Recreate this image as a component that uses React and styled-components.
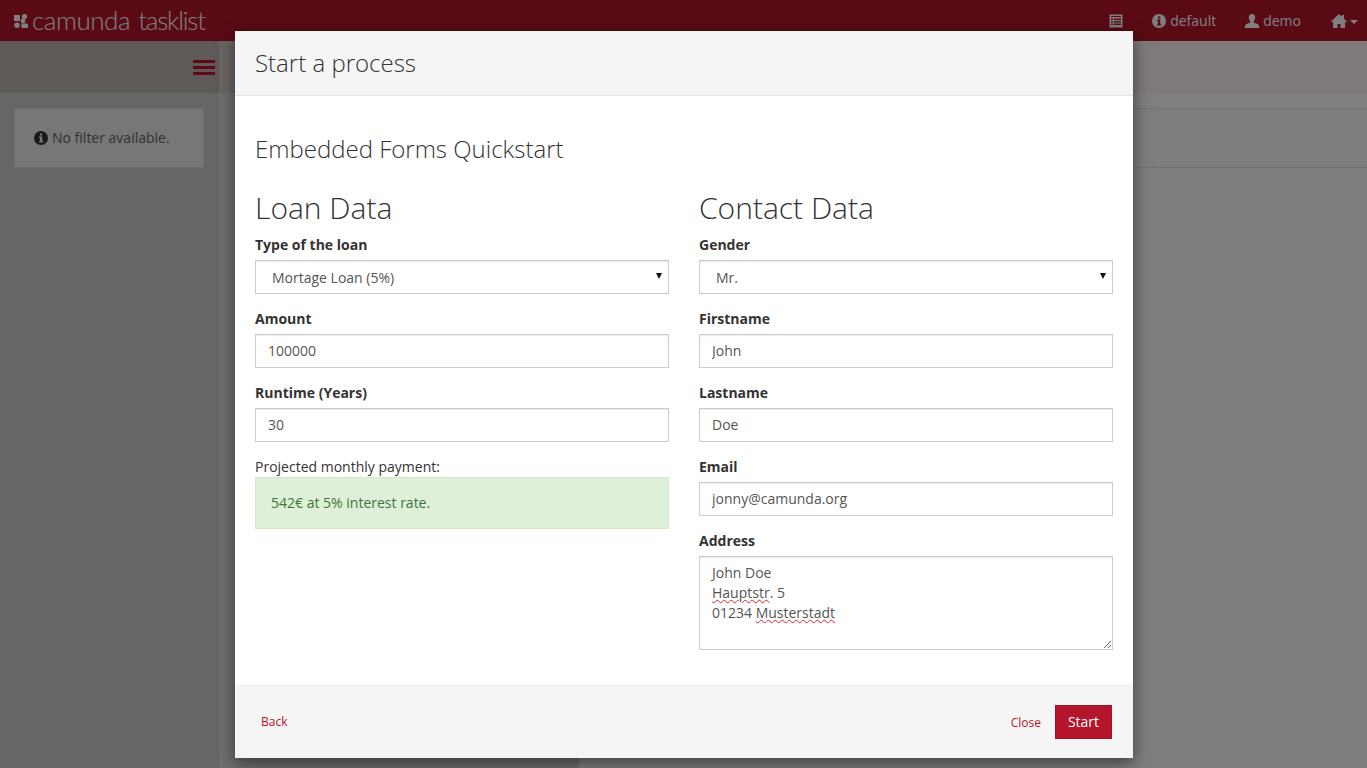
import React from "react";
import styled, { createGlobalStyle } from "styled-components";

const GlobalStyle = createGlobalStyle`
  * { box-sizing: border-box; }
  html, body { margin: 0; height: 100%; overflow: hidden; }
  body {
    font-family: "Open Sans", "Liberation Sans", sans-serif;
    font-size: 14px;
    line-height: 20px;
    color: #333;
    background: #fff;
  }
`;

const Page = styled.div`
  position: relative;
  height: 100vh;
  display: flex;
  flex-direction: column;
  overflow: hidden;
`;

const Navbar = styled.header`
  height: 41px;
  flex: none;
  background: #b5152b;
  color: #fff;
  display: flex;
  align-items: center;
  justify-content: space-between;
  padding: 0 9px 0 14px;
`;

const Brand = styled.div`
  display: flex;
  align-items: center;
  gap: 4px;
  font-family: Lato, "Open Sans", sans-serif;
  font-weight: 300;
  font-size: 26px;
  line-height: 39px;
  height: 41px;
  svg {
    margin-top: 1px;
  }
`;

const BrandWord = styled.span`
  letter-spacing: ${(p) => p.$spacing}px;
  margin-left: ${(p) => p.$gap || 0}px;
`;

const NavItems = styled.nav`
  display: flex;
  align-items: center;
`;

const NavItem = styled.span`
  display: flex;
  align-items: center;
  gap: ${(p) => p.$inner || 4}px;
  margin-left: ${(p) => p.$gap}px;
`;

const Caret = styled.i`
  width: 0;
  height: 0;
  margin-top: 2px;
  border-top: 4px solid #fff;
  border-left: 4px solid transparent;
  border-right: 4px solid transparent;
`;

const Toolbar = styled.div`
  height: 52px;
  flex: none;
  display: flex;
  background: #fef4f4;
`;

const ToolbarLeft = styled.div`
  width: 219px;
  background: #beb2af;
  display: flex;
  align-items: center;
  justify-content: flex-end;
  padding: 1px 4px 0 0;
`;

const Burger = styled.div`
  width: 22px;
  display: flex;
  flex-direction: column;
  gap: 3px;
  span {
    height: 3px;
    background: #b5152b;
  }
`;

const ToolbarMiddle = styled.div`
  width: 16px;
  background: #d4cac7;
`;

const Columns = styled.main`
  flex: 1;
  display: flex;
  min-height: 0;
`;

const FilterColumn = styled.aside`
  width: 219px;
  background: #ccc;
  padding: 15px 14px;
`;

const FilterNote = styled.div`
  width: 190px;
  height: 60px;
  background: #eee;
  border: 1px solid #ddd;
  color: #666;
  display: flex;
  align-items: center;
  gap: 4px;
  padding-left: 19px;
`;

const ListColumn = styled.section`
  width: 360px;
  background: #ddd;
`;

const TaskColumn = styled.section`
  flex: 1;
  background: #fbfbfb;
`;

const TaskStrip = styled.div`
  height: 16px;
  background: #fff;
  border-bottom: 1px solid #e8e8e8;
`;

const TaskHead = styled.div`
  height: 59px;
  border-bottom: 1px solid #e4e4e4;
`;

const Backdrop = styled.div`
  position: absolute;
  inset: 0;
  background: rgba(0, 0, 0, 0.5);
`;

const Modal = styled.div`
  position: absolute;
  top: 31px;
  left: 235px;
  width: 898px;
  height: 727px;
  background: #fff;
  box-shadow: 0 5px 15px rgba(0, 0, 0, 0.5);
  display: flex;
  flex-direction: column;
`;

const ModalHeader = styled.div`
  height: 65px;
  flex: none;
  background: #f5f5f5;
  border-bottom: 1px solid #e5e5e5;
  padding: 19px 20px;
`;

const ModalTitle = styled.h3`
  margin: 0;
  font-size: 24px;
  font-weight: 300;
  line-height: 26px;
`;

const ModalBody = styled.div`
  flex: 1;
  padding: 40px 20px 0;
`;

const FormTitle = styled.h3`
  margin: 0 0 29px;
  font-size: 24px;
  font-weight: 300;
  line-height: 26px;
`;

const FormColumns = styled.div`
  display: grid;
  grid-template-columns: 414px 414px;
  column-gap: 30px;
`;

const SectionTitle = styled.h2`
  margin: 0 0 11px;
  font-size: 30px;
  font-weight: 300;
  line-height: 33px;
`;

const Group = styled.div`
  margin-bottom: 15px;
`;

const Label = styled.label`
  display: block;
  margin-bottom: 5px;
  font-weight: 700;
`;

const fieldStyle = `
  display: block;
  width: 100%;
  padding: 6px 12px;
  font: inherit;
  color: #555;
  background: #fff;
  border: 1px solid #ccc;
  border-radius: 0;
  box-shadow: inset 0 1px 1px rgba(0, 0, 0, 0.075);
  outline: none;
`;

const Input = styled.input`
  ${fieldStyle}
  height: 34px;
  padding-top: 5px;
  padding-bottom: 7px;
`;

const SelectWrap = styled.div`
  position: relative;
  &::after {
    content: "";
    position: absolute;
    top: 13px;
    right: 7px;
    border-top: 6px solid #111;
    border-left: 3px solid transparent;
    border-right: 3px solid transparent;
    pointer-events: none;
  }
`;

const Select = styled.select`
  ${fieldStyle}
  height: 34px;
  padding: 7px 12px 5px 16px;
  appearance: none;
`;

const TextArea = styled.div`
  ${fieldStyle}
  height: 94px;
  overflow: auto;
  resize: vertical;
`;

const Misspelled = styled.span`
  text-decoration: underline wavy #e0222a 1px;
  text-underline-offset: 1px;
`;

const Hint = styled.div`
  line-height: 20px;
`;

const Alert = styled.div`
  height: 52px;
  padding: 15px;
  color: #3c763d;
  background: #dff0d8;
  border: 1px solid #d6e9c6;
`;

const ModalFooter = styled.footer`
  height: 73px;
  flex: none;
  background: #f5f5f5;
  border-top: 1px solid #eee;
  padding: 19px 21px 0 26px;
  display: flex;
  justify-content: space-between;
`;

const LinkButton = styled.a`
  font-size: 12px;
  line-height: 34px;
  color: #b5152b;
  margin-top: ${(p) => p.$top || 0}px;
`;

const FooterActions = styled.div`
  display: flex;
  gap: 14px;
`;

const PrimaryButton = styled.button`
  width: 57px;
  height: 34px;
  padding: 0;
  font: inherit;
  color: #fff;
  background: #b5152b;
  border: 1px solid #a11326;
  border-radius: 0;
`;

const InfoIcon = ({ color = "#fff", glyph = "#b5152b" }) => (
  <svg width="14" height="14" viewBox="0 0 14 14">
    <circle cx="7" cy="7" r="7" fill={color} />
    <path
      d="M6 2.4h2.2v2H6zM4.9 5.6h3.4v4.6h1v1.4H4.9v-1.4h1V7H4.9z"
      fill={glyph}
    />
  </svg>
);

const ListIcon = () => (
  <svg width="14" height="14" viewBox="0 0 14 14">
    <path
      fillRule="evenodd"
      d="M0.5 0.5h13v13h-13zM2 2v1h10V2zM2 4.5v1.5h2V4.5zM5 4.5v1.5h7V4.5zM2 7v1.5h2V7zM5 7v1.5h7V7zM2 9.5V11h2V9.5zM5 9.5V11h7V9.5z"
      fill="#fff"
    />
  </svg>
);

const UserIcon = () => (
  <svg width="14" height="14" viewBox="0 0 14 14">
    <path
      d="M7 0c2 0 3.2 1.4 3.2 3.4 0 1.6-.7 3.2-1.6 4 0 .9.3 1.2 1.3 1.6 1.8.6 3.6 1.3 4.1 2.4V14H0v-2.6c.5-1.1 2.3-1.8 4.1-2.4 1-.4 1.3-.7 1.3-1.6-.9-.8-1.6-2.4-1.6-4C3.8 1.4 5 0 7 0z"
      fill="#fff"
    />
  </svg>
);

const HomeIcon = () => (
  <svg width="16" height="14" viewBox="0 0 16 14">
    <path
      d="M8 0l3 2.8V1h2v3.7L16 7.5 15.2 8.4 14 7.4V14H9.5v-4h-3v4H2V7.4L.8 8.4 0 7.5z"
      fill="#fff"
    />
  </svg>
);

const LogoMark = () => (
  <svg width="14" height="14" viewBox="0 0 14 14">
    <g fill="#fff">
      <rect x="0" y="1" width="6" height="6" />
      <circle cx="10.5" cy="2.6" r="2.6" />
      <circle cx="9" cy="7" r="2.4" />
      <circle cx="3" cy="11.3" r="2.7" />
      <rect x="7.5" y="9.5" width="6.5" height="4.5" />
    </g>
  </svg>
);

function App() {
  return (
    <Page>
      <GlobalStyle />
      <Navbar>
        <Brand>
          <LogoMark />
          <BrandWord $spacing={-0.45}>camunda</BrandWord>
          <BrandWord $spacing={-1.2} $gap={4}>tasklist</BrandWord>
        </Brand>
        <NavItems>
          <NavItem>
            <ListIcon />
          </NavItem>
          <NavItem $gap={29}>
            <InfoIcon />
            default
          </NavItem>
          <NavItem $gap={29}>
            <UserIcon />
            demo
          </NavItem>
          <NavItem $gap={30} $inner={3}>
            <HomeIcon />
            <Caret />
          </NavItem>
        </NavItems>
      </Navbar>
      <Toolbar>
        <ToolbarLeft>
          <Burger>
            <span />
            <span />
            <span />
          </Burger>
        </ToolbarLeft>
        <ToolbarMiddle />
      </Toolbar>
      <Columns>
        <FilterColumn>
          <FilterNote>
            <InfoIcon color="#333" glyph="#eee" />
            No filter available.
          </FilterNote>
        </FilterColumn>
        <ListColumn />
        <TaskColumn>
          <TaskStrip />
          <TaskHead />
        </TaskColumn>
      </Columns>
      <Backdrop />
      <Modal>
        <ModalHeader>
          <ModalTitle>Start a process</ModalTitle>
        </ModalHeader>
        <ModalBody>
          <FormTitle>Embedded Forms Quickstart</FormTitle>
          <FormColumns>
            <div>
              <SectionTitle>Loan Data</SectionTitle>
              <Group>
                <Label>Type of the loan</Label>
                <SelectWrap>
                  <Select defaultValue="mortage">
                    <option value="mortage">Mortage Loan (5%)</option>
                  </Select>
                </SelectWrap>
              </Group>
              <Group>
                <Label>Amount</Label>
                <Input defaultValue="100000" />
              </Group>
              <Group>
                <Label>Runtime (Years)</Label>
                <Input defaultValue="30" />
              </Group>
              <Hint>Projected monthly payment:</Hint>
              <Alert>542€ at 5% interest rate.</Alert>
            </div>
            <div>
              <SectionTitle>Contact Data</SectionTitle>
              <Group>
                <Label>Gender</Label>
                <SelectWrap>
                  <Select defaultValue="mr">
                    <option value="mr">Mr.</option>
                  </Select>
                </SelectWrap>
              </Group>
              <Group>
                <Label>Firstname</Label>
                <Input defaultValue="John" />
              </Group>
              <Group>
                <Label>Lastname</Label>
                <Input defaultValue="Doe" />
              </Group>
              <Group>
                <Label>Email</Label>
                <Input defaultValue="jonny@camunda.org" />
              </Group>
              <Group>
                <Label>Address</Label>
                <TextArea role="textbox">
                  John Doe
                  <br />
                  <Misspelled>Hauptstr</Misspelled>. 5
                  <br />
                  01234 <Misspelled>Musterstadt</Misspelled>
                </TextArea>
              </Group>
            </div>
          </FormColumns>
        </ModalBody>
        <ModalFooter>
          <LinkButton>Back</LinkButton>
          <FooterActions>
            <LinkButton $top={1}>Close</LinkButton>
            <PrimaryButton>Start</PrimaryButton>
          </FooterActions>
        </ModalFooter>
      </Modal>
    </Page>
  );
}

export default App;
